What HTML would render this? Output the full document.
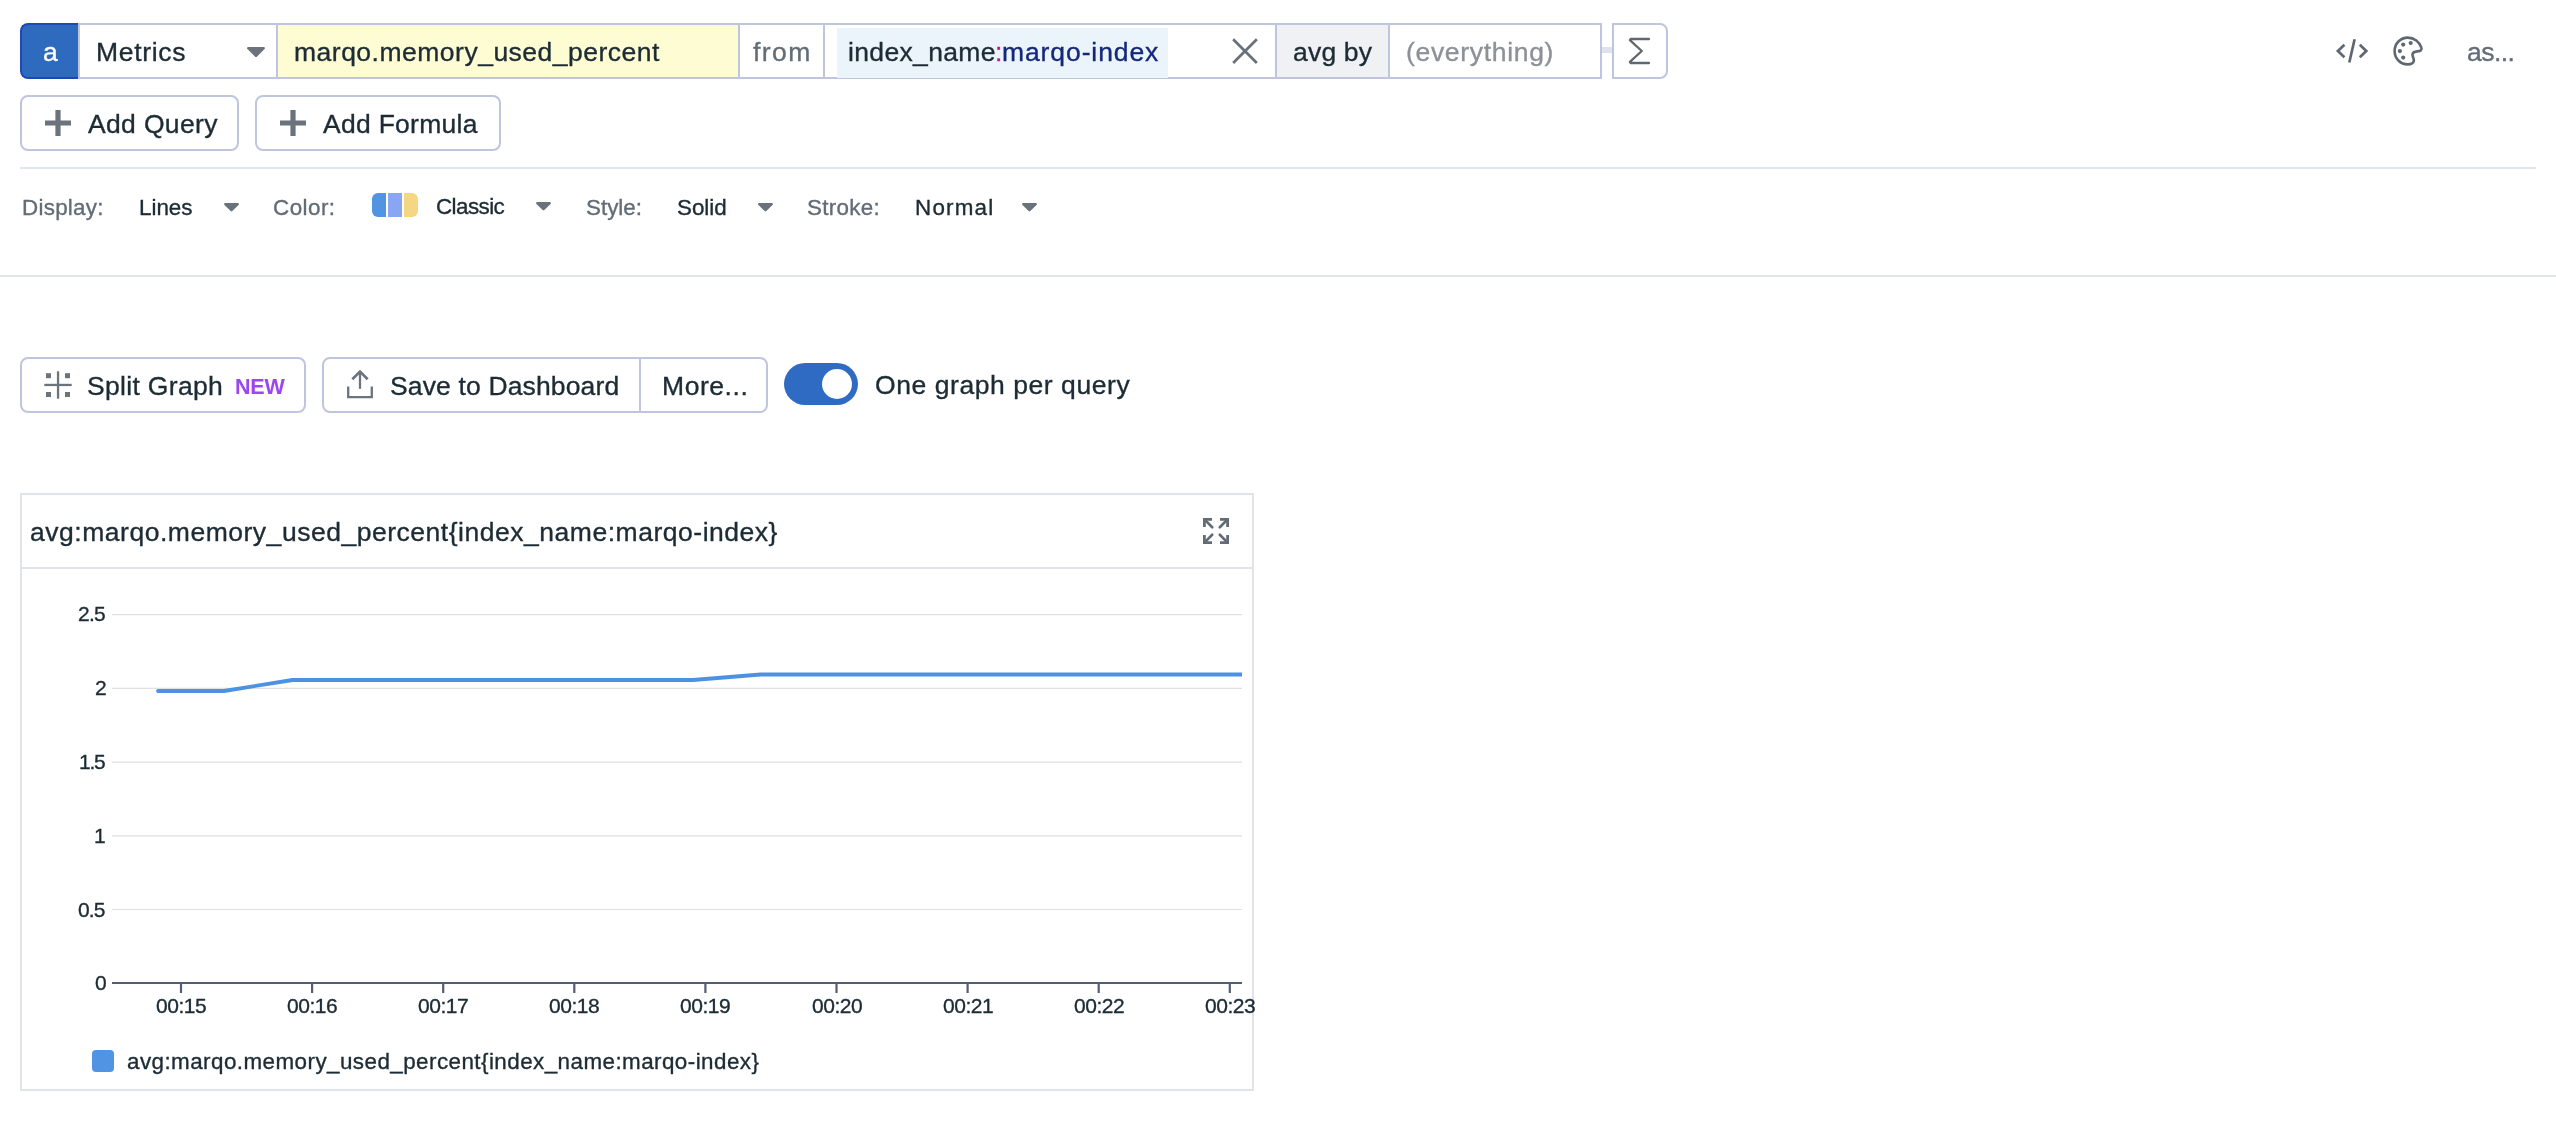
<!DOCTYPE html>
<html lang="en">
<head>
<meta charset="utf-8">
<title>Metrics Explorer</title>
<style>
html,body{margin:0;padding:0;background:#fff;}
body{width:2556px;height:1140px;position:relative;overflow:hidden;font-family:"Liberation Sans",sans-serif;}
.abs,.t{position:absolute;}
.grp{position:absolute;left:0;top:0;width:0;height:0;}
.t{white-space:nowrap;display:block;will-change:transform;}
.b{box-sizing:border-box;border:2px solid #bfc5de;position:absolute;background:#fff;}
.btn{border-radius:8px;}
svg{position:absolute;overflow:visible;}
</style>
</head>
<body>

<!-- ===== Query editor row ===== -->
<section class="grp" id="query-editor">
<div class="abs" id="q-letter" style="left:20px;top:23px;width:58px;height:56px;background:#2e6bbf;border-radius:8px 0 0 8px;box-sizing:border-box;border:2px solid #1e48b7;border-right:none;"></div>
<div class="b" id="q-row" style="left:78px;top:23px;width:1524px;height:56px;"></div>
<div class="abs" id="q-metric-bg" style="left:278px;top:25px;width:460px;height:52px;background:#fefcd2;"></div>
<div class="abs" id="q-avgby-bg" style="left:1277px;top:25px;width:111px;height:52px;background:#f0f1f5;"></div>
<div class="abs" id="q-tag" style="left:837px;top:28px;width:331px;height:50px;background:#ecf4fb;"></div>
<div class="abs vline" style="left:276px;top:25px;width:2px;height:52px;background:#bfc5de;"></div>
<div class="abs vline" style="left:738px;top:25px;width:2px;height:52px;background:#bfc5de;"></div>
<div class="abs vline" style="left:823px;top:25px;width:2px;height:52px;background:#bfc5de;"></div>
<div class="abs vline" style="left:1275px;top:25px;width:2px;height:52px;background:#bfc5de;"></div>
<div class="abs vline" style="left:1388px;top:25px;width:2px;height:52px;background:#bfc5de;"></div>
<div class="abs" id="q-connector" style="left:1602px;top:47px;width:10px;height:5.5px;background:#dfe2ec;"></div>
<div class="b" id="q-sigma" style="left:1612px;top:23px;width:56px;height:56px;border-radius:0 8px 8px 0;"></div>

<!-- select caret -->
<svg style="left:245.8px;top:46px" width="20" height="13" viewBox="0 0 20 13"><path d="M2.3 2.2 H17.7 L10 9.9 Z" fill="#6b727b" stroke="#6b727b" stroke-width="2.4" stroke-linejoin="round"/></svg>
<!-- clear X -->
<svg style="left:1230px;top:37px" width="30" height="30" viewBox="0 0 30 30"><path d="M3.15 2.25 L26.85 25.95 M26.85 2.25 L3.15 25.95" stroke="#68717a" stroke-width="2.7" fill="none"/></svg>
<!-- sigma -->
<svg style="left:1626px;top:35px" width="28" height="32" viewBox="0 0 28 32"><path d="M23 4 H4.6 L3.9 5.1 L15.8 16 L3.9 26.9 L4.6 28 H23" stroke="#5f6870" stroke-width="2.3" fill="none" stroke-linejoin="round" stroke-linecap="round"/></svg>
<!-- code icon -->
<svg style="left:2330px;top:35px" width="44" height="32" viewBox="0 0 44 32"><g stroke="#5f6871" stroke-width="2.7" fill="none"><path d="M14.4 9.7 L7.9 16 L14.4 22.3"/><path d="M29.8 9.7 L36.3 16 L29.8 22.3"/><path d="M24.6 4.3 L19.3 27.5"/></g></svg>
<!-- palette icon -->
<svg style="left:2392px;top:35px" width="32" height="32" viewBox="0 0 32 32"><path d="M15.8 2.6 C8.4 2.6 2.6 8.6 2.6 16 C2.6 23.4 8.4 29.4 15.8 29.4 C18.6 29.4 21.2 28.4 21.8 26.2 C22.3 24.2 20.4 21.6 20.5 19.6 C20.6 17.2 23 16.6 25.4 16.4 C28.8 16.2 30.2 14.8 29.4 12.6 C27.6 6.8 22.2 2.6 15.8 2.6 Z" stroke="#5f6871" stroke-width="2.6" fill="none" stroke-linejoin="round"/><g fill="#5f6871"><circle cx="11.2" cy="9.6" r="2.1"/><circle cx="18.7" cy="8" r="2.1"/><circle cx="7.9" cy="16.1" r="2.1"/><circle cx="11.2" cy="22.6" r="2.1"/></g></svg>

<span class="t" id="t-qa" style="left:43.10px;top:35.00px;font-size:26.5px;line-height:34px;letter-spacing:0.000px;color:#ffffff;font-weight:400;-webkit-text-stroke:0.35px #ffffff;">a</span>
<span class="t" id="t-metrics" style="left:96.10px;top:35.00px;font-size:26.5px;line-height:34px;letter-spacing:0.666px;color:#1c2b34;font-weight:400;-webkit-text-stroke:0.35px #1c2b34;">Metrics</span>
<span class="t" id="t-metric" style="left:293.84px;top:35.00px;font-size:26.5px;line-height:34px;letter-spacing:0.498px;color:#1c2b34;font-weight:400;-webkit-text-stroke:0.35px #1c2b34;">marqo.memory_used_percent</span>
<span class="t" id="t-from" style="left:752.60px;top:35.00px;font-size:26.5px;line-height:34px;letter-spacing:1.467px;color:#626c76;font-weight:400;-webkit-text-stroke:0.35px #626c76;">from</span>
<span class="t" id="t-tagk" style="left:847.60px;top:35.00px;font-size:26.5px;line-height:34px;letter-spacing:0.344px;color:#1c2b34;font-weight:400;-webkit-text-stroke:0.35px #1c2b34;">index_name</span>
<span class="t" id="t-tagc" style="left:995.10px;top:35.00px;font-size:26.5px;line-height:34px;letter-spacing:0.000px;color:#c2188f;font-weight:400;-webkit-text-stroke:0.35px #c2188f;">:</span>
<span class="t" id="t-tagv" style="left:1001.84px;top:35.00px;font-size:26.5px;line-height:34px;letter-spacing:0.903px;color:#14287b;font-weight:400;-webkit-text-stroke:0.35px #14287b;">marqo-index</span>
<span class="t" id="t-avgby" style="left:1293.20px;top:35.00px;font-size:26.5px;line-height:34px;letter-spacing:0.195px;color:#1c2b34;font-weight:400;-webkit-text-stroke:0.35px #1c2b34;">avg by</span>
<span class="t" id="t-every" style="left:1405.90px;top:35.00px;font-size:26.5px;line-height:34px;letter-spacing:0.681px;color:#8b9197;font-weight:400;-webkit-text-stroke:0.35px #8b9197;">(everything)</span>
<span class="t" id="t-as" style="left:2466.90px;top:35.00px;font-size:26.5px;line-height:34px;letter-spacing:-0.551px;color:#626c76;font-weight:400;-webkit-text-stroke:0.35px #626c76;">as...</span>
</section>

<!-- ===== Add Query / Add Formula ===== -->
<section class="grp" id="query-actions">
<div class="b btn" id="btn-addq" style="left:20px;top:95px;width:219px;height:56px;"></div>
<div class="b btn" id="btn-addf" style="left:255px;top:95px;width:246px;height:56px;"></div>
<svg style="left:45px;top:110px" width="26" height="26" viewBox="0 0 26 26"><path d="M10.4 0 H15.6 V10.4 H26 V15.6 H15.6 V26 H10.4 V15.6 H0 V10.4 H10.4 Z" fill="#6b737c"/></svg>
<svg style="left:280px;top:110px" width="26" height="26" viewBox="0 0 26 26"><path d="M10.4 0 H15.6 V10.4 H26 V15.6 H15.6 V26 H10.4 V15.6 H0 V10.4 H10.4 Z" fill="#6b737c"/></svg>

<span class="t" id="t-addq" style="left:88.02px;top:107.00px;font-size:26.5px;line-height:34px;letter-spacing:0.347px;color:#1c2b34;font-weight:400;-webkit-text-stroke:0.35px #1c2b34;">Add Query</span>
<span class="t" id="t-addf" style="left:323.42px;top:107.00px;font-size:26.5px;line-height:34px;letter-spacing:0.278px;color:#1c2b34;font-weight:400;-webkit-text-stroke:0.35px #1c2b34;">Add Formula</span>
</section>

<div class="abs" id="sep1" style="left:20px;top:167px;width:2516px;height:2px;background:#e1e5ec;"></div>

<!-- ===== Display options ===== -->
<section class="grp" id="display-options">
<svg class="caret" style="left:222.5px;top:201.8px" width="17" height="11" viewBox="0 0 17 11"><path d="M2.3 2.2 H14.7 L8.5 8.2 Z" fill="#6b727b" stroke="#6b727b" stroke-width="2.4" stroke-linejoin="round"/></svg>
<svg class="caret" style="left:534.8px;top:200.8px" width="17" height="11" viewBox="0 0 17 11"><path d="M2.3 2.2 H14.7 L8.5 8.2 Z" fill="#6b727b" stroke="#6b727b" stroke-width="2.4" stroke-linejoin="round"/></svg>
<svg class="caret" style="left:756.5px;top:201.8px" width="17" height="11" viewBox="0 0 17 11"><path d="M2.3 2.2 H14.7 L8.5 8.2 Z" fill="#6b727b" stroke="#6b727b" stroke-width="2.4" stroke-linejoin="round"/></svg>
<svg class="caret" style="left:1021.2px;top:201.8px" width="17" height="11" viewBox="0 0 17 11"><path d="M2.3 2.2 H14.7 L8.5 8.2 Z" fill="#6b727b" stroke="#6b727b" stroke-width="2.4" stroke-linejoin="round"/></svg>
<div class="abs" id="swatch" style="left:372px;top:193px;width:46px;height:24px;border-radius:6px;overflow:hidden;">
  <div class="abs" style="left:0;top:0;width:14px;height:24px;background:#5294e2;"></div>
  <div class="abs" style="left:16px;top:0;width:14px;height:24px;background:#8aa6f3;"></div>
  <div class="abs" style="left:32px;top:0;width:14px;height:24px;background:#f5d783;"></div>
</div>

<span class="t" id="t-display" style="left:22.42px;top:193.00px;font-size:22.4px;line-height:29px;letter-spacing:0.269px;color:#626c76;font-weight:400;-webkit-text-stroke:0.35px #626c76;">Display:</span>
<span class="t" id="t-lines" style="left:139.22px;top:193.00px;font-size:22.4px;line-height:29px;letter-spacing:-0.004px;color:#1c2b34;font-weight:400;-webkit-text-stroke:0.35px #1c2b34;">Lines</span>
<span class="t" id="t-color" style="left:273.20px;top:193.00px;font-size:22.4px;line-height:29px;letter-spacing:0.460px;color:#626c76;font-weight:400;-webkit-text-stroke:0.35px #626c76;">Color:</span>
<span class="t" id="t-classic" style="left:436.40px;top:192.00px;font-size:22.4px;line-height:29px;letter-spacing:-0.567px;color:#1c2b34;font-weight:400;-webkit-text-stroke:0.35px #1c2b34;">Classic</span>
<span class="t" id="t-style" style="left:585.54px;top:193.00px;font-size:22.4px;line-height:29px;letter-spacing:0.002px;color:#626c76;font-weight:400;-webkit-text-stroke:0.35px #626c76;">Style:</span>
<span class="t" id="t-solid" style="left:676.84px;top:193.00px;font-size:22.4px;line-height:29px;letter-spacing:-0.035px;color:#1c2b34;font-weight:400;-webkit-text-stroke:0.35px #1c2b34;">Solid</span>
<span class="t" id="t-stroke" style="left:807.24px;top:193.00px;font-size:22.4px;line-height:29px;letter-spacing:0.285px;color:#626c76;font-weight:400;-webkit-text-stroke:0.35px #626c76;">Stroke:</span>
<span class="t" id="t-normal" style="left:914.82px;top:193.00px;font-size:22.4px;line-height:29px;letter-spacing:1.217px;color:#1c2b34;font-weight:400;-webkit-text-stroke:0.35px #1c2b34;">Normal</span>
</section>

<div class="abs" id="sep2" style="left:0;top:275px;width:2556px;height:2px;background:#e1e5ec;"></div>

<!-- ===== Action row ===== -->
<section class="grp" id="graph-actions">
<div class="b btn" id="btn-split" style="left:20px;top:357px;width:286px;height:56px;"></div>
<div class="b btn" id="btn-save" style="left:322px;top:357px;width:446px;height:56px;"></div>
<div class="abs" style="left:639px;top:359px;width:2px;height:52px;background:#bfc5de;"></div>
<!-- split icon -->
<svg style="left:44px;top:371px" width="28" height="28" viewBox="0 0 28 28"><g fill="#6b737c"><rect x="12.9" y="0.3" width="2.3" height="27.4"/><rect x="0.3" y="12.8" width="27.4" height="2.3"/><rect x="2" y="2.2" width="5" height="5"/><rect x="21" y="2.2" width="5" height="5"/><rect x="2" y="21" width="5" height="5"/><rect x="21" y="21" width="5" height="5"/></g></svg>
<!-- share icon -->
<svg style="left:346px;top:369px" width="28" height="30" viewBox="0 0 28 30"><g stroke="#6b737c" stroke-width="2.3" fill="none"><path d="M14 2.4 V19.8"/><path d="M6.3 10.3 L14 2.6 L21.7 10.3" stroke-width="2.7"/><path d="M2.2 17.5 V28.2 H25.8 V17.5"/></g></svg>
<!-- toggle -->
<div class="abs" id="toggle" style="left:784px;top:363px;width:74px;height:42px;border-radius:21px;background:#2f6bc2;"></div>
<div class="abs" id="knob" style="left:822px;top:369px;width:30px;height:30px;border-radius:15px;background:#fff;"></div>

<span class="t" id="t-split" style="left:87.40px;top:369.00px;font-size:26.5px;line-height:34px;letter-spacing:0.320px;color:#1c2b34;font-weight:400;-webkit-text-stroke:0.35px #1c2b34;">Split Graph</span>
<span class="t" id="t-new" style="left:234.60px;top:373.00px;font-size:21.5px;line-height:28px;letter-spacing:-0.200px;color:#9b45f5;font-weight:700;">NEW</span>
<span class="t" id="t-save" style="left:390.00px;top:369.00px;font-size:26.5px;line-height:34px;letter-spacing:0.144px;color:#1c2b34;font-weight:400;-webkit-text-stroke:0.35px #1c2b34;">Save to Dashboard</span>
<span class="t" id="t-more" style="left:661.60px;top:369.00px;font-size:26.5px;line-height:34px;letter-spacing:0.557px;color:#1c2b34;font-weight:400;-webkit-text-stroke:0.35px #1c2b34;">More...</span>
<span class="t" id="t-one" style="left:874.80px;top:368.00px;font-size:26.5px;line-height:34px;letter-spacing:0.561px;color:#1c2b34;font-weight:400;-webkit-text-stroke:0.35px #1c2b34;">One graph per query</span>
</section>

<!-- ===== Graph panel ===== -->
<section class="grp" id="graph-panel">
<div class="abs" id="panel" style="left:20px;top:493px;width:1234px;height:598px;box-sizing:border-box;border:2px solid #e0e3ec;background:#fff;"></div>
<div class="abs" id="panel-div" style="left:22px;top:567px;width:1230px;height:2px;background:#e0e3ec;"></div>
<!-- expand icon -->
<svg style="left:1203px;top:518px" width="26" height="26" viewBox="0 0 26 26"><g stroke="#636c75" fill="none"><g stroke-width="2.8"><path d="M1.4 9 V1.4 H9"/><path d="M17 1.4 H24.6 V9"/><path d="M1.4 17 V24.6 H9"/><path d="M17 24.6 H24.6 V17"/></g><g stroke-width="2.7" stroke-linecap="round"><path d="M2.4 2.4 L9.2 9.2"/><path d="M23.6 2.4 L16.8 9.2"/><path d="M2.4 23.6 L9.2 16.8"/><path d="M23.6 23.6 L16.8 16.8"/></g></g></svg>

<!-- chart -->
<svg id="chart" style="left:0;top:0" width="1254" height="1140" viewBox="0 0 1254 1140">
  <g stroke="#e0e0e3" stroke-width="1.2">
    <path d="M112 614.7 H1242"/><path d="M112 688.4 H1242"/><path d="M112 762.1 H1242"/><path d="M112 835.8 H1242"/><path d="M112 909.5 H1242"/>
  </g>
  <path d="M112 983 H1242" stroke="#555c77" stroke-width="2.2"/>
  <g stroke="#555c77" stroke-width="2.2">
    <path d="M181 983 V993"/><path d="M312.1 983 V993"/><path d="M443.2 983 V993"/><path d="M574.3 983 V993"/><path d="M705.4 983 V993"/><path d="M836.5 983 V993"/><path d="M967.6 983 V993"/><path d="M1098.7 983 V993"/><path d="M1229.8 983 V993"/>
  </g>
  <path d="M158 691 H224 L292.6 680 H693 L760.5 674.5 H1242" stroke="#4d92e2" stroke-width="3.8" fill="none" stroke-linejoin="round"/>
  <circle cx="158" cy="691" r="1.9" fill="#4d92e2"/>
</svg>
<div class="abs" id="legend-swatch" style="left:92px;top:1050px;width:22px;height:22px;border-radius:4px;background:#5194e4;"></div>

<span class="t" id="t-title" style="left:30.30px;top:515.00px;font-size:26.5px;line-height:34px;letter-spacing:0.522px;color:#1c2b34;font-weight:400;-webkit-text-stroke:0.35px #1c2b34;">avg:marqo.memory_used_percent{index_name:marqo-index}</span>
<span class="t" id="t-legend" style="left:126.59px;top:1047.00px;font-size:22.4px;line-height:29px;letter-spacing:0.448px;color:#1c2b34;font-weight:400;-webkit-text-stroke:0.35px #1c2b34;">avg:marqo.memory_used_percent{index_name:marqo-index}</span>
<span class="t" id="t-y2_5" style="left:78.06px;top:600.00px;font-size:21px;line-height:27px;letter-spacing:-0.729px;color:#1c2b34;font-weight:400;-webkit-text-stroke:0.35px #1c2b34;">2.5</span>
<span class="t" id="t-y2" style="left:94.66px;top:674.00px;font-size:21px;line-height:27px;letter-spacing:0.000px;color:#1c2b34;font-weight:400;-webkit-text-stroke:0.35px #1c2b34;">2</span>
<span class="t" id="t-y1_5" style="left:78.80px;top:748.00px;font-size:21px;line-height:27px;letter-spacing:-1.250px;color:#1c2b34;font-weight:400;-webkit-text-stroke:0.35px #1c2b34;">1.5</span>
<span class="t" id="t-y1" style="left:94.00px;top:822.00px;font-size:21px;line-height:27px;letter-spacing:0.000px;color:#1c2b34;font-weight:400;-webkit-text-stroke:0.35px #1c2b34;">1</span>
<span class="t" id="t-y0_5" style="left:78.10px;top:896.00px;font-size:21px;line-height:27px;letter-spacing:-0.899px;color:#1c2b34;font-weight:400;-webkit-text-stroke:0.35px #1c2b34;">0.5</span>
<span class="t" id="t-y0" style="left:94.80px;top:969.00px;font-size:21px;line-height:27px;letter-spacing:0.000px;color:#1c2b34;font-weight:400;-webkit-text-stroke:0.35px #1c2b34;">0</span>
<span class="t" id="t-x0" style="left:156.00px;top:992.00px;font-size:21px;line-height:27px;letter-spacing:-0.475px;color:#1c2b34;font-weight:400;-webkit-text-stroke:0.35px #1c2b34;">00:15</span>
<span class="t" id="t-x1" style="left:287.10px;top:992.00px;font-size:21px;line-height:27px;letter-spacing:-0.475px;color:#1c2b34;font-weight:400;-webkit-text-stroke:0.35px #1c2b34;">00:16</span>
<span class="t" id="t-x2" style="left:418.20px;top:992.00px;font-size:21px;line-height:27px;letter-spacing:-0.475px;color:#1c2b34;font-weight:400;-webkit-text-stroke:0.35px #1c2b34;">00:17</span>
<span class="t" id="t-x3" style="left:549.30px;top:992.00px;font-size:21px;line-height:27px;letter-spacing:-0.475px;color:#1c2b34;font-weight:400;-webkit-text-stroke:0.35px #1c2b34;">00:18</span>
<span class="t" id="t-x4" style="left:680.40px;top:992.00px;font-size:21px;line-height:27px;letter-spacing:-0.475px;color:#1c2b34;font-weight:400;-webkit-text-stroke:0.35px #1c2b34;">00:19</span>
<span class="t" id="t-x5" style="left:811.50px;top:992.00px;font-size:21px;line-height:27px;letter-spacing:-0.475px;color:#1c2b34;font-weight:400;-webkit-text-stroke:0.35px #1c2b34;">00:20</span>
<span class="t" id="t-x6" style="left:942.60px;top:992.00px;font-size:21px;line-height:27px;letter-spacing:-0.475px;color:#1c2b34;font-weight:400;-webkit-text-stroke:0.35px #1c2b34;">00:21</span>
<span class="t" id="t-x7" style="left:1073.70px;top:992.00px;font-size:21px;line-height:27px;letter-spacing:-0.475px;color:#1c2b34;font-weight:400;-webkit-text-stroke:0.35px #1c2b34;">00:22</span>
<span class="t" id="t-x8" style="left:1204.80px;top:992.00px;font-size:21px;line-height:27px;letter-spacing:-0.475px;color:#1c2b34;font-weight:400;-webkit-text-stroke:0.35px #1c2b34;">00:23</span>
</section>

</body>
</html>
